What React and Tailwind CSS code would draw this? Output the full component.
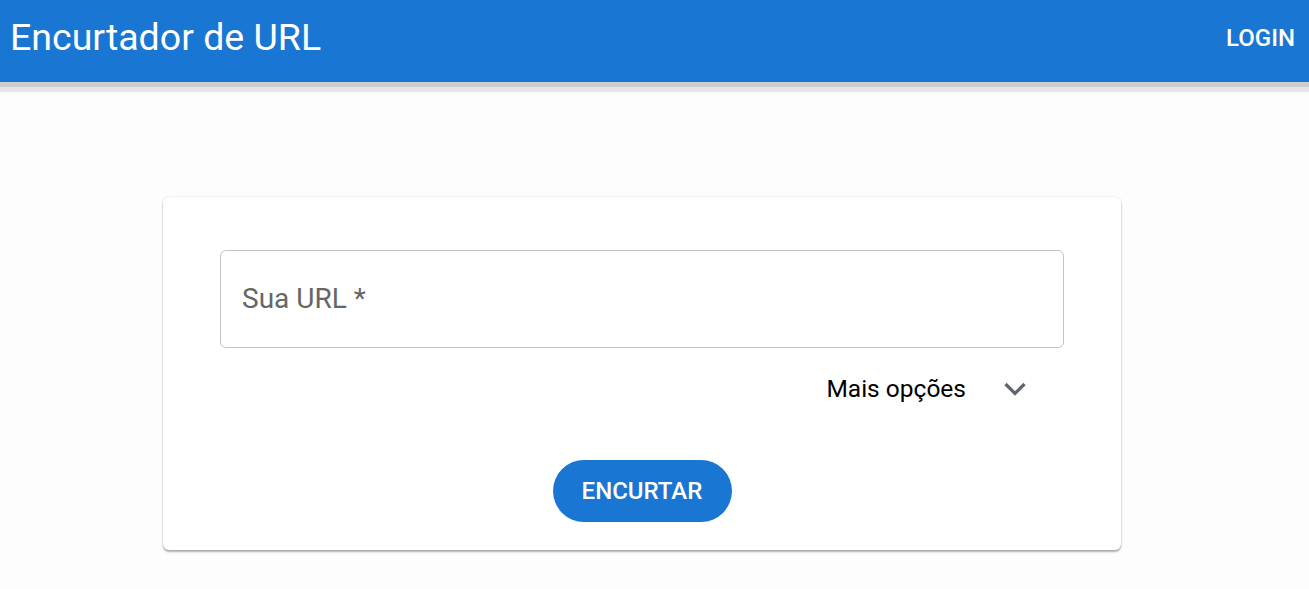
import React from 'react';

const ChevronDown = () => (
  <svg width="24" height="16" viewBox="0 0 24 16" className="text-[#5f6670]">
    <path d="M2.5 3 L12 12.5 L21.5 3" fill="none" stroke="currentColor" strokeWidth="3.2" />
  </svg>
);

const App = () => {
  return (
    <div className="min-h-screen bg-[#fdfdfd] font-['Roboto',sans-serif]">
      {/* App bar */}
      <header className="h-[82px] bg-[#1976d2] flex items-center justify-between pl-[10px] pr-[14px] pb-[6px] shadow-[0_5px_0_#cdcdcd,0_10px_0_#e5e5e5]">
        <h1 className="text-white text-[37.5px] leading-none">Encurtador de URL</h1>
        <button className="text-white text-[24px] font-medium leading-none">LOGIN</button>
      </header>

      {/* Card */}
      <div className="pt-[115px] pl-[163px]">
        <div className="w-[958px] h-[353px] bg-white rounded-md shadow-[0_2px_2px_rgba(0,0,0,0.3),0_0_2px_rgba(0,0,0,0.15)] px-[57px] pt-[53px]">
          <div className="h-[98px] border border-[#c4c4c4] rounded-md flex items-center pl-[21px]">
            <span className="text-[28px] text-[#666] leading-none">Sua URL *</span>
          </div>

          <div className="flex justify-end items-center gap-[37px] pr-[37px] mt-[29px]">
            <span className="text-[24.5px] text-black leading-none">Mais opções</span>
            <ChevronDown />
          </div>

          <div className="flex justify-center mt-[58px]">
            <button className="w-[179px] h-[62px] rounded-full bg-[#1976d2] text-white text-[24px] font-medium leading-none">
              ENCURTAR
            </button>
          </div>
        </div>
      </div>
    </div>
  );
};

export default App;
